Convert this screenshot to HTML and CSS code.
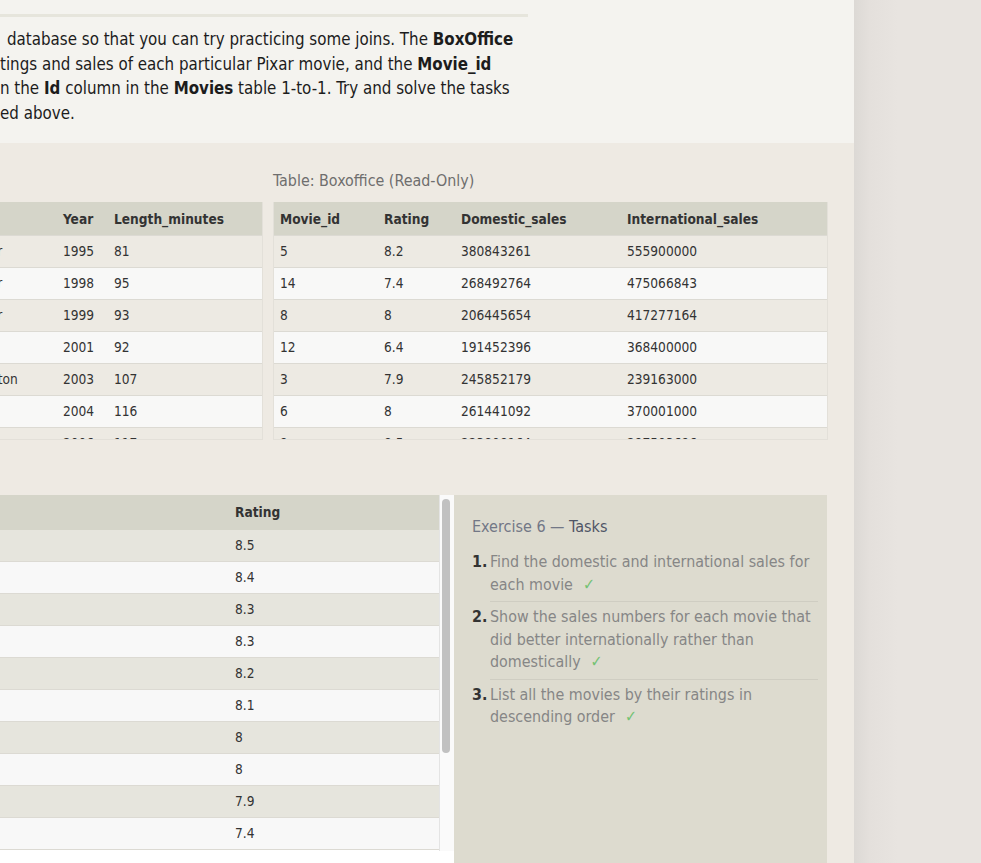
FILE: index.html
```html
<!DOCTYPE html>
<html lang="en">
<head>
<meta charset="utf-8">
<title>SQL Lesson 6: Multi-table queries with JOINs</title>
<link rel="stylesheet" href="styles.css">
</head>
<body>
<div class="page">
  <main class="main">
    <section class="intro">
      <div class="rule"></div>
      <p class="para">
        <span class="line first">database so that you can try practicing some joins. The <b>BoxOffice</b></span>
        <span class="line">tings and sales of each particular Pixar movie, and the <b>Movie_id</b></span>
        <span class="line">n the <b>Id</b> column in the <b>Movies</b> table 1-to-1. Try and solve the tasks</span>
        <span class="line">ed above.</span>
      </p>
    </section>

    <section class="exercise">
      <div class="tables">
        <div class="tbl-block movies">
          <div class="caption">Table: Movies (Read-Only)</div>
          <div class="tbl-scroll">
            <table class="data">
              <colgroup><col class="c-id"><col class="c-title"><col class="c-dir"><col class="c-year"><col class="c-len"></colgroup>
              <thead><tr><th>Id</th><th>Title</th><th>Director</th><th>Year</th><th>Length_minutes</th></tr></thead>
              <tbody>
                <tr><td>1</td><td>Toy Story</td><td>John Lasseter</td><td>1995</td><td>81</td></tr>
                <tr><td>2</td><td>A Bug's Life</td><td>John Lasseter</td><td>1998</td><td>95</td></tr>
                <tr><td>3</td><td>Toy Story 2</td><td>John Lasseter</td><td>1999</td><td>93</td></tr>
                <tr><td>4</td><td>Monsters, Inc.</td><td>Pete Docter</td><td>2001</td><td>92</td></tr>
                <tr><td>5</td><td>Finding Nemo</td><td>Andrew Stanton</td><td>2003</td><td>107</td></tr>
                <tr><td>6</td><td>The Incredibles</td><td>Brad Bird</td><td>2004</td><td>116</td></tr>
                <tr><td>7</td><td>Cars</td><td>John Lasseter</td><td>2006</td><td>117</td></tr>
              </tbody>
            </table>
          </div>
        </div>
        <div class="tbl-block boxoffice">
          <div class="caption">Table: Boxoffice (Read-Only)</div>
          <div class="tbl-scroll">
            <table class="data">
              <colgroup><col class="c-mid"><col class="c-rate"><col class="c-dom"><col class="c-int"></colgroup>
              <thead><tr><th>Movie_id</th><th>Rating</th><th>Domestic_sales</th><th>International_sales</th></tr></thead>
              <tbody>
                <tr><td>5</td><td>8.2</td><td>380843261</td><td>555900000</td></tr>
                <tr><td>14</td><td>7.4</td><td>268492764</td><td>475066843</td></tr>
                <tr><td>8</td><td>8</td><td>206445654</td><td>417277164</td></tr>
                <tr><td>12</td><td>6.4</td><td>191452396</td><td>368400000</td></tr>
                <tr><td>3</td><td>7.9</td><td>245852179</td><td>239163000</td></tr>
                <tr><td>6</td><td>8</td><td>261441092</td><td>370001000</td></tr>
                <tr><td>9</td><td>8.5</td><td>223808164</td><td>297503696</td></tr>
              </tbody>
            </table>
          </div>
        </div>
      </div>

      <div class="workspace">
        <div class="results">
          <div class="results-body">
            <div class="results-view">
              <table class="data result">
                <colgroup><col class="c-rtitle"><col class="c-rrate"></colgroup>
                <thead><tr><th>Title</th><th>Rating</th></tr></thead>
                <tbody>
                  <tr><td>WALL-E</td><td>8.5</td></tr>
                  <tr><td>Toy Story 3</td><td>8.4</td></tr>
                  <tr><td>Toy Story</td><td>8.3</td></tr>
                  <tr><td>Up</td><td>8.3</td></tr>
                  <tr><td>Finding Nemo</td><td>8.2</td></tr>
                  <tr><td>Monsters, Inc.</td><td>8.1</td></tr>
                  <tr><td>Ratatouille</td><td>8</td></tr>
                  <tr><td>The Incredibles</td><td>8</td></tr>
                  <tr><td>Toy Story 2</td><td>7.9</td></tr>
                  <tr><td>A Bug's Life</td><td>7.4</td></tr>
                </tbody>
              </table>
            </div>
            <div class="vscroll"><div class="thumb"></div></div>
          </div>
          <div class="hscroll"></div>
        </div>

        <aside class="tasks">
          <h3 class="tasks-title">Exercise 6 — <span>Tasks</span></h3>
          <ol class="task-list">
            <li><span class="num">1.</span><span class="task-text">Find the domestic and international sales for each movie<span class="check">✓</span></span></li>
            <li><span class="num">2.</span><span class="task-text">Show the sales numbers for each movie that did better internationally rather than domestically<span class="check">✓</span></span></li>
            <li><span class="num">3.</span><span class="task-text">List all the movies by their ratings in descending order<span class="check">✓</span></span></li>
          </ol>
        </aside>
      </div>
    </section>
  </main>
  <div class="side"></div>
</div>
</body>
</html>
```

FILE: styles.css
```css
* { box-sizing: border-box; }

html, body {
  margin: 0;
  height: 100%;
}

body {
  font-family: "DejaVu Sans Condensed", "DejaVu Sans", sans-serif;
  font-stretch: condensed;
  color: #222;
  background: #e8e4e0;
  overflow: hidden;
}

.page {
  display: flex;
  min-height: 100%;
}

.main {
  width: 854px;
  flex: none;
  display: flex;
  flex-direction: column;
  background: #eeeae3;
}

.side {
  flex: 1;
  background: linear-gradient(to right, #dcd9d5 0, #e4e0dc 16px, #e8e4e0 44px);
}

/* intro */
.intro {
  height: 143px;
  background: #f4f3ef;
  padding-top: 14px;
}

.rule {
  width: 528px;
  height: 3px;
  background: #e6e5dc;
}

.para {
  margin: 10px 0 0;
  font-size: 16.8px;
  line-height: 24.5px;
  color: #1c1c1c;
}

.para .line {
  display: block;
  white-space: nowrap;
}

.para .line.first { padding-left: 7px; }

/* exercise */
.exercise {
  flex: 1;
  padding: 28px 26px 0 0;
}

.tables {
  display: flex;
  gap: 10px;
  margin-left: -300px;
}

.tbl-block.movies { width: 563px; }
.tbl-block.boxoffice { width: 555px; }

.caption {
  font-size: 15.9px;
  line-height: 18px;
  color: #6e6e6e;
  margin-top: 1px;
  margin-bottom: 12px;
}

.tbl-scroll {
  height: 238px;
  overflow: hidden;
  border: 1px solid #e3e0d9;
  border-top: none;
}

table.data {
  width: 100%;
  table-layout: fixed;
  border-collapse: collapse;
  font-size: 13.6px;
  color: #333;
}

table.data th {
  text-align: left;
  font-weight: bold;
  background: #d5d5c9;
  padding: 9px 6px 7px;
  line-height: 17px;
  border-bottom: 1px solid #dcdad3;
  white-space: nowrap;
}

table.data td {
  padding: 7px 6px;
  line-height: 17px;
  border-bottom: 1px solid #dcdad3;
  white-space: nowrap;
  overflow: hidden;
}

table.data tbody tr:nth-child(odd) td { background: #edeae3; }
table.data tbody tr:nth-child(even) td { background: #f8f8f7; }

.c-id { width: 40px; }
.c-title { width: 173px; }
.c-dir { width: 143px; }
.c-year { width: 51px; }
.c-len { width: 156px; }

.c-mid { width: 104px; }
.c-rate { width: 77px; }
.c-dom { width: 166px; }
.c-int { width: 208px; }

/* workspace */
.workspace {
  display: flex;
  margin-top: 55px;
  margin-left: -300px;
  margin-right: 1px;
}

.results {
  width: 754px;
  flex: none;
  background: #fff;
}

.results-body {
  display: flex;
  height: 356px;
}

.results-view {
  flex: 1;
  overflow: hidden;
  border-right: 1px solid #e4e4e4;
}

table.result th {
  padding: 9px 6px 9px;
  border-bottom: none;
}

table.result tbody tr:nth-child(odd) td { background: #e6e5dd; }
table.result tbody tr:nth-child(even) td { background: #f8f8f8; }

.c-rtitle { width: 529px; }
.c-rrate { width: auto; }

.vscroll {
  width: 14px;
  flex: none;
  background: #fafafa;
  padding: 4px 3px 0 2px;
}

.thumb {
  width: 8px;
  height: 254px;
  background: #c1c1c1;
  border-radius: 4px;
}

.hscroll {
  height: 14px;
  background: #fff;
}

/* tasks */
.tasks {
  flex: 1;
  background: #dddbcf;
  padding: 21px 9px 20px 18px;
  min-height: 400px;
}

.tasks-title {
  margin: 0;
  font-size: 16px;
  line-height: 22px;
  font-weight: normal;
  color: #727786;
}

.tasks-title span { color: #4f5566; }

.task-list {
  list-style: none;
  margin: 9px 0 0;
  padding: 0;
  font-size: 15.9px;
  line-height: 22.5px;
}

.task-list li {
  display: flex;
}

.num {
  width: 18px;
  flex: none;
  font-weight: bold;
  color: #333;
  padding-top: 4px;
}

.task-text {
  flex: 1;
  color: #868686;
  padding: 4px 0 5px;
  border-bottom: 1px solid #cfcdc2;
}

.task-list li:last-child .task-text { border-bottom: none; }

.check {
  color: #74c274;
  margin-left: 10px;
}
```
